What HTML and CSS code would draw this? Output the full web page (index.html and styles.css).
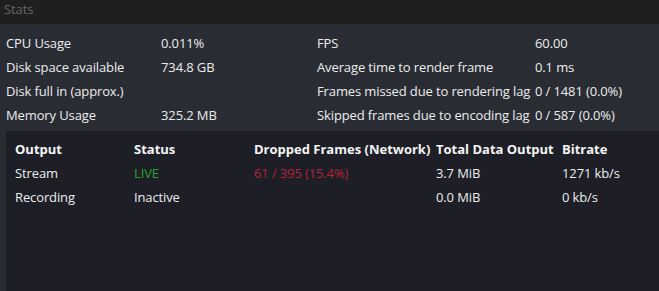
FILE: index.html
```html
<!DOCTYPE html>
<html lang="en">
<head>
    <meta charset="UTF-8">
    <title>Stats</title>
    <link rel="stylesheet" href="styles.css">
</head>
<body>
    <div class="window">
        <div class="titlebar">Stats</div>
        <div class="stats">
            <div class="label">CPU Usage</div>
            <div class="value">0.011%</div>
            <div class="label">FPS</div>
            <div class="value">60.00</div>

            <div class="label">Disk space available</div>
            <div class="value">734.8 GB</div>
            <div class="label">Average time to render frame</div>
            <div class="value">0.1 ms</div>

            <div class="label">Disk full in (approx.)</div>
            <div class="value"></div>
            <div class="label">Frames missed due to rendering lag</div>
            <div class="value">0 / 1481 (0.0%)</div>

            <div class="label">Memory Usage</div>
            <div class="value">325.2 MB</div>
            <div class="label">Skipped frames due to encoding lag</div>
            <div class="value">0 / 587 (0.0%)</div>
        </div>
        <div class="outputs">
            <div class="head">Output</div>
            <div class="head">Status</div>
            <div class="head">Dropped Frames (Network)</div>
            <div class="head">Total Data Output</div>
            <div class="head">Bitrate</div>

            <div>Stream</div>
            <div class="live">LIVE</div>
            <div class="dropped">61 / 395 (15.4%)</div>
            <div>3.7 MiB</div>
            <div>1271 kb/s</div>

            <div>Recording</div>
            <div>Inactive</div>
            <div></div>
            <div>0.0 MiB</div>
            <div>0 kb/s</div>
        </div>
    </div>
</body>
</html>
```

FILE: styles.css
```css
* {
    margin: 0;
    padding: 0;
    box-sizing: border-box;
}

html,
body {
    width: 659px;
    height: 291px;
    overflow: hidden;
}

body {
    background: #2a2c34;
    color: #ececec;
    font-family: "Open Sans", "Liberation Sans", sans-serif;
    font-size: 13px;
    letter-spacing: -0.12px;
}

.window {
    display: flex;
    flex-direction: column;
    height: 100%;
}

.titlebar {
    height: 24px;
    padding-left: 4px;
    line-height: 19px;
    background: #1f1f1f;
    color: #666;
}

.stats {
    display: grid;
    grid-template-columns: 155px 156px 218px 1fr;
    grid-auto-rows: 24px;
    padding: 7px 0 4px 6px;
    line-height: 24px;
    white-space: nowrap;
}

.outputs {
    flex: 1;
    display: grid;
    grid-template-columns: 119px 120px 182px 126px 1fr;
    grid-auto-rows: 24px;
    align-content: start;
    margin-left: 6px;
    padding: 6px 0 0 9px;
    line-height: 24px;
    background: #1e1f26;
    white-space: nowrap;
}

.head {
    font-weight: bold;
    color: #f4f4f4;
    letter-spacing: 0;
}

.live {
    color: #2aa32e;
}

.dropped {
    color: #b8203c;
}
```
